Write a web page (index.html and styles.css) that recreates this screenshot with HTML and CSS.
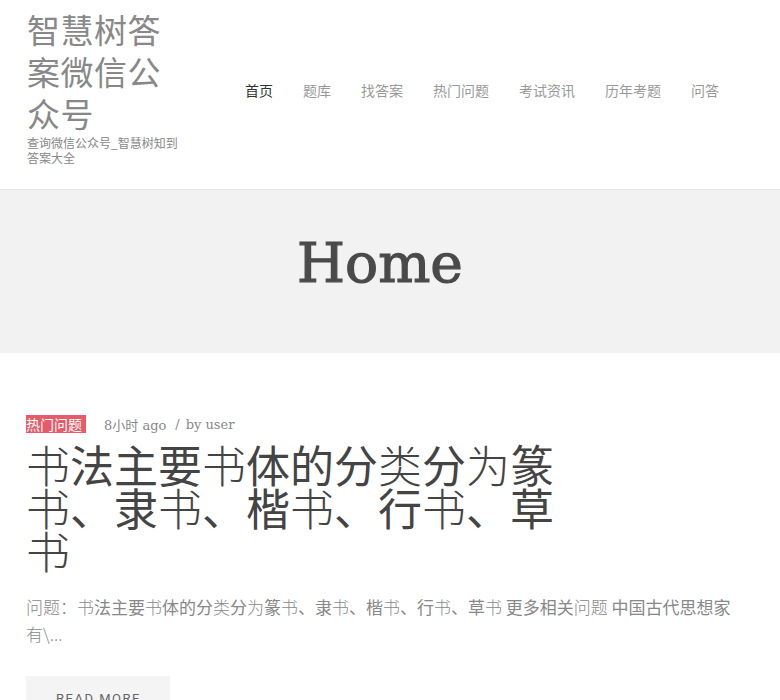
FILE: index.html
```html
<!DOCTYPE html>
<html lang="zh-CN">
<head>
<meta charset="utf-8">
<title>Home</title>
<link rel="stylesheet" href="styles.css">
</head>
<body>
<header class="site-header">
  <div class="branding">
    <div class="site-title">智慧树答案微信公众号</div>
    <div class="site-desc">查询微信公众号_智慧树知到答案大全</div>
  </div>
  <nav class="main-nav">
    <a class="nav-item active" href="#">首页</a>
    <a class="nav-item" href="#">题库</a>
    <a class="nav-item" href="#">找答案</a>
    <a class="nav-item" href="#">热门问题</a>
    <a class="nav-item" href="#">考试资讯</a>
    <a class="nav-item" href="#">历年考题</a>
    <a class="nav-item" href="#">问答</a>
  </nav>
</header>
<section class="page-band">
  <h1 class="page-title">Home</h1>
</section>
<main class="content">
  <article class="post">
    <div class="post-meta">
      <a class="cat-tag" href="#">热门问题</a>
      <span class="meta-text">8小时 ago</span>
      <span class="meta-sep">/</span>
      <span class="meta-text">by user</span>
    </div>
    <h2 class="post-title"><span class="lt">书</span>法主要<span class="lt">书</span>体的分<span class="lt">类</span>分<span class="lt">为</span>篆<span class="lt">书</span>、隶<span class="lt">书</span>、楷<span class="lt">书</span>、行<span class="lt">书</span>、草<span class="lt">书</span></h2>
    <p class="excerpt"><span class="lt">问题：书</span>法主要<span class="lt">书</span>体的分<span class="lt">类</span>分<span class="lt">为</span>篆<span class="lt">书</span>、隶<span class="lt">书</span>、楷<span class="lt">书</span>、行<span class="lt">书</span>、草<span class="lt">书</span> 更多相关<span class="lt">问题</span> 中国古代思想家<span class="lt">有\...</span></p>
    <a class="read-more" href="#">Read More</a>
  </article>
</main>
</body>
</html>
```
FILE: styles.css
```css
html, body {
  margin: 0;
  padding: 0;
  background: #ffffff;
}
body {
  font-family: "Noto Sans CJK SC", "Noto Sans", sans-serif;
  color: #444;
}
a { text-decoration: none; }

.site-header {
  display: flex;
  align-items: center;
  padding: 8px 26px 24px 27px;
  border-bottom: 1px solid #e6e6e6;
}
.branding {
  width: 153px;
  flex: none;
}
.site-title {
  font-size: 33px;
  line-height: 42px;
  color: #888;
  letter-spacing: 0.5px;
}
.site-desc {
  font-size: 12px;
  line-height: 15px;
  color: #888;
  margin-top: 1px;
}
.main-nav {
  display: flex;
  gap: 30px;
  margin-left: 65px;
  margin-top: 7px;
}
.nav-item {
  font-size: 14px;
  line-height: 20px;
  color: #999;
}
.nav-item.active {
  color: #333;
}

.page-band {
  background: #f2f2f2;
  height: 163px;
  padding-right: 20px;
  padding-bottom: 18px;
  box-sizing: border-box;
  display: flex;
  align-items: center;
  justify-content: center;
}
.page-title {
  margin: 0;
  font-family: "DejaVu Serif", serif;
  font-weight: normal;
  font-size: 55px;
  line-height: 64px;
  color: #4a4a4a;
  -webkit-text-stroke: 1.2px #4a4a4a;
}

.content {
  padding: 62px 26px 0 26px;
}
.post-meta {
  display: flex;
  align-items: center;
  height: 18px;
}
.cat-tag {
  background: #e55b68;
  color: #fff;
  font-size: 14px;
  line-height: 18px;
  padding: 0 4px 0 0;
  margin-right: 18px;
}
.meta-text {
  font-family: "DejaVu Serif", "Noto Sans CJK SC", serif;
  font-size: 13px;
  color: #888;
}
.meta-sep {
  font-family: "DejaVu Serif", serif;
  font-size: 13px;
  color: #888;
  margin: 0 6px 0 9px;
}
.post-title {
  margin: 10px 0 0 0;
  max-width: 550px;
  font-size: 44px;
  line-height: 43px;
  font-weight: 400;
  color: #444;
}
.post-title .lt {
  font-weight: 300;
  color: #444;
}
.excerpt {
  margin: 21px 0 0 0;
  font-size: 17px;
  line-height: 27px;
  color: #888;
  max-width: 712px;
}
.excerpt .lt {
  font-weight: 300;
  color: #8a8a8a;
}
.read-more {
  display: block;
  box-sizing: border-box;
  width: 144px;
  white-space: nowrap;
  margin-top: 29px;
  background: #f4f4f4;
  color: #666;
  font-family: "Roboto", "Noto Sans", sans-serif;
  font-size: 13px;
  letter-spacing: 1.5px;
  text-transform: uppercase;
  padding: 15px 0 12px 30px;
}
```
